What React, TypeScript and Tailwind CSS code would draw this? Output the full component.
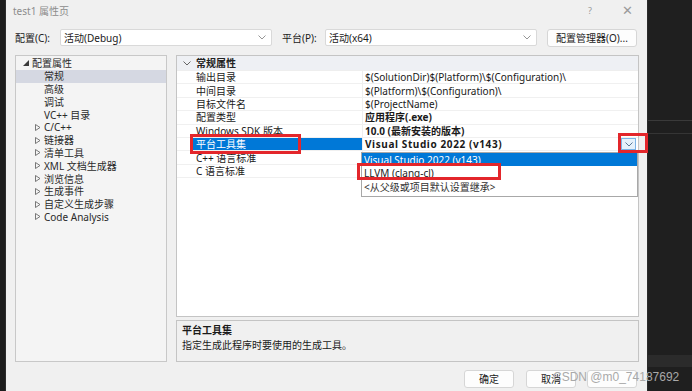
import type { ReactNode } from "react";

const FONT = "font-['Noto_Sans','Noto_Sans_CJK_SC',sans-serif]";

const treeItems: { label: string; arrow?: boolean; selected?: boolean }[] = [
  { label: "常规", selected: true },
  { label: "高级" },
  { label: "调试" },
  { label: "VC++ 目录" },
  { label: "C/C++", arrow: true },
  { label: "链接器", arrow: true },
  { label: "清单工具", arrow: true },
  { label: "XML 文档生成器", arrow: true },
  { label: "浏览信息", arrow: true },
  { label: "生成事件", arrow: true },
  { label: "自定义生成步骤", arrow: true },
  { label: "Code Analysis", arrow: true },
];

const props: { name: string; value: string; bold?: boolean; selected?: boolean }[] = [
  { name: "输出目录", value: "$(SolutionDir)$(Platform)\\$(Configuration)\\" },
  { name: "中间目录", value: "$(Platform)\\$(Configuration)\\" },
  { name: "目标文件名", value: "$(ProjectName)" },
  { name: "配置类型", value: "应用程序(.exe)", bold: true },
  { name: "Windows SDK 版本", value: "10.0 (最新安装的版本)", bold: true },
  { name: "平台工具集", value: "Visual Studio 2022 (v143)", bold: true, selected: true },
  { name: "C++ 语言标准", value: "" },
  { name: "C 语言标准", value: "" },
];

function Chevron({ className = "" }: { className?: string }) {
  return (
    <svg width="8" height="5" viewBox="0 0 8 5" className={className}>
      <path d="M0.5 0.5 L4 4 L7.5 0.5" fill="none" stroke="currentColor" strokeWidth="0.9" />
    </svg>
  );
}

function Combo({ text, width }: { text: string; width: string }) {
  return (
    <div className={`${width} h-[17px] bg-white border border-[#d9d9d9] rounded-[2px] flex items-center pl-[3px] pr-[5px] text-[#1a1a1a]`}>
      <span className="flex-1">{text}</span>
      <Chevron className="text-[#8a8a8a]" />
    </div>
  );
}

function Btn({ children, className = "" }: { children?: ReactNode; className?: string }) {
  return (
    <div className={`h-[18px] bg-[#fdfdfd] border border-[#d6d6d6] rounded-[3px] flex items-center justify-center text-[#1a1a1a] ${className}`}>
      {children}
    </div>
  );
}

function TriRight() {
  return (
    <svg width="6" height="7" viewBox="0 0 6 7" className="text-[#6a6a6a]">
      <path d="M0.5 0.5 L5 3.5 L0.5 6.5 Z" fill="none" stroke="currentColor" strokeWidth="0.9" />
    </svg>
  );
}

export default function App() {
  return (
    <div className={`w-[692px] h-[391px] flex overflow-hidden bg-[#1e1e1e] text-[10px] leading-none ${FONT}`}>
      {/* dark strip of the editor behind */}
      <div className="w-[6px] bg-[#1c1c1c] border-r border-[#2c2c2c]" />

      {/* dialog */}
      <div className="relative w-[641px] h-full bg-[#f0f0f0] flex flex-col">
        <div className="h-[21px] flex items-center pl-[7px] pr-[14px] text-[#8c8c8c]">
          <span className="flex-1">test1 属性页</span>
          <span className="mr-[30px] text-[9px] text-[#9a9a9a]">?</span>
          <span className="text-[13px] font-light text-[#9a9a9a]">✕</span>
        </div>

        <div className="mt-[8px] h-[17px] flex items-center text-[#1a1a1a]">
          <span className="ml-[9px] w-[45px]">配置(C):</span>
          <Combo text="活动(Debug)" width="w-[212px]" />
          <span className="ml-[10px] w-[43px]">平台(P):</span>
          <Combo text="活动(x64)" width="w-[212px]" />
          <Btn className="ml-[10px] w-[90px]">配置管理器(O)...</Btn>
        </div>

        <div className="mt-[9px] h-[307px] flex">
          {/* tree */}
          <div className="ml-[9px] w-[152px] h-full bg-[#f4f4f4] border border-[#c8c8c8] pt-[1px] text-[#2a2a2a]">
            <div className="h-[12.8px] flex items-center pl-[7px]">
              <svg width="6" height="6" viewBox="0 0 6 6" className="mr-[3px]">
                <path d="M6 0 L6 6 L0 6 Z" fill="#3a3a3a" />
              </svg>
              <span>配置属性</span>
            </div>
            {treeItems.map((it) => (
              <div
                key={it.label}
                className={`h-[12.8px] flex items-center ${it.selected ? "bg-[#d5d8e2]" : ""}`}
              >
                <span className="w-[28px] flex justify-end pr-[3px]">{it.arrow ? <TriRight /> : null}</span>
                <span>{it.label}</span>
              </div>
            ))}
          </div>

          {/* right column */}
          <div className="ml-[9px] w-[463px] h-full flex flex-col">
            <div className="h-[262px] bg-white border border-[#c4c4c4] text-[#1a1a1a]">
              <div className="h-[15px] flex items-center bg-[#eef0f4] border-b border-[#eeeeee]">
                <span className="w-[19px] flex justify-center">
                  <Chevron className="text-[#555]" />
                </span>
                <span className="font-bold text-[#222]">常规属性</span>
              </div>
              {props.map((p) => (
                <div key={p.name} className="h-[13.4px] flex border-b border-[#f0f0f0]">
                  <span className="w-[16px]" />
                  <span
                    className={`w-[170px] flex items-center pl-[3px] border-r border-[#eeeeee] ${
                      p.selected ? "bg-[#0078d7] text-white" : ""
                    }`}
                  >
                    {p.name}
                  </span>
                  <span className={`flex-1 flex items-center pl-[2px] ${p.bold ? "font-bold" : ""}`}>
                    <span className={`flex-1 ${p.selected ? "tracking-[0.6px]" : ""}`}>{p.value}</span>
                    {p.selected ? (
                      <span className="mr-[2px] w-[15px] h-[12px] bg-[#e5f1fb] border border-[#7bb3e6] flex items-center justify-center">
                        <Chevron className="text-[#4a6a8a]" />
                      </span>
                    ) : null}
                  </span>
                </div>
              ))}
            </div>
            <div className="mt-[3px] h-[42px] bg-[#f0f0f0] border border-[#c4c4c4] pl-[5px] pt-[4px] text-[#1a1a1a]">
              <div className="font-bold">平台工具集</div>
              <div className="mt-[5px]">指定生成此程序时要使用的生成工具。</div>
            </div>
          </div>
        </div>

        <div className="mt-[8px] flex">
          <Btn className="ml-[458px] w-[50px]">确定</Btn>
          <Btn className="ml-[12px] w-[50px]">取消</Btn>
          <Btn className="ml-[11px] w-[50px]" />
        </div>

        {/* open dropdown list */}
        <div className="absolute left-[355px] top-[152px] w-[277px] h-[45px] bg-white border border-[#a8a8a8] text-[#1a1a1a]">
          <div className="h-[13px] flex items-center pl-[2px] bg-[#0078d7] text-white">Visual Studio 2022 (v143)</div>
          <div className="h-[14px] flex items-center pl-[2px]">LLVM (clang-cl)</div>
          <div className="h-[13px] flex items-center pl-[2px] text-[#333]">&lt;从父级或项目默认设置继承&gt;</div>
        </div>

        {/* red annotation boxes */}
        <div className="absolute left-[184px] top-[134px] w-[111px] h-[20px] border-[3px] border-[#e3262b]" />
        <div className="absolute left-[351px] top-[163px] w-[144px] h-[17px] border-[3px] border-[#e3262b]" />
        <div className="absolute left-[612px] top-[133px] w-[30px] h-[20px] border-[3px] border-[#e3262b]" />

        {/* watermark */}
        <div className="absolute left-[547px] top-[371px] text-[12px] text-[#a9a9a9] font-['Liberation_Sans',sans-serif] whitespace-nowrap">
          CSDN @m0_74187692
        </div>
      </div>

      {/* editor behind, right side */}
      <div className="flex-1 flex flex-col bg-[#1f1f1f] border-l border-[#2a2a2a]">
        <div className="h-[120px]" />
        <div className="h-px bg-[#3a3a3a]" />
        <div className="h-[12px]" />
        <div className="h-px bg-[#353535]" />
        <div className="h-[221px]" />
        <div className="h-[12px] bg-[#2b2b2b]" />
        <div className="flex-1" />
      </div>
    </div>
  );
}
